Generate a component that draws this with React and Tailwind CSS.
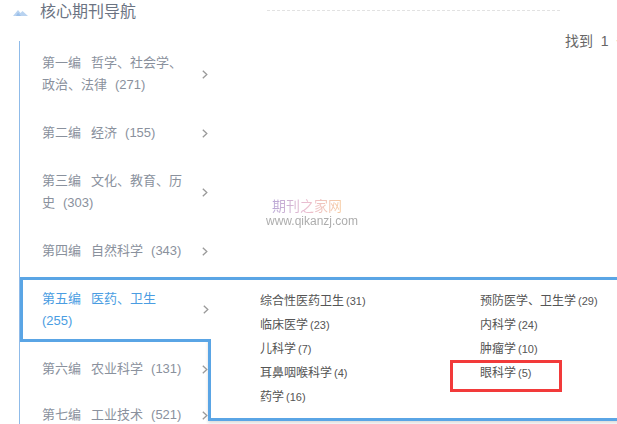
import React from "react";

const FONT = { fontFamily: '"Liberation Sans","Noto Sans CJK SC",sans-serif' };

function Chevron() {
  return (
    <svg width="6" height="9" viewBox="0 0 6 9" className="ml-[11px] shrink-0">
      <polyline points="0.8,0.8 4.8,4.5 0.8,8.2" fill="none" stroke="#9a9a9a" strokeWidth="1.3" />
    </svg>
  );
}

function Label({ head, body, count, br }) {
  return (
    <>
      {head}
      <span className="ml-[10px]">{body}</span>
      {br ? <br /> : null}
      <span className={br ? "" : "ml-[8px]"}>({count})</span>
    </>
  );
}

const items = [
  { head: "第一编", body: "哲学、社会学、政治、法律", count: "271", h: "h-[69px] pb-[3px]" },
  { head: "第二编", body: "经济", count: "155", h: "h-[46px]" },
  { head: "第三编", body: "文化、教育、历史", count: "303", h: "h-[72px]" },
  { head: "第四编", body: "自然科学", count: "343", h: "h-[46px]" },
  { head: "第五编", body: "医药、卫生", count: "255", active: true },
  { head: "第六编", body: "农业科学", count: "131", h: "h-[46px]" },
  { head: "第七编", body: "工业技术", count: "521", h: "h-[46px]" },
];

const sub = [
  ["综合性医药卫生", "31"],
  ["预防医学、卫生学", "29"],
  ["临床医学", "23"],
  ["内科学", "24"],
  ["儿科学", "7"],
  ["肿瘤学", "10"],
  ["耳鼻咽喉科学", "4"],
  ["眼科学", "5"],
  ["药学", "16"],
];

export default function App() {
  return (
    <div className="relative w-[617px] h-[424px] overflow-hidden bg-white" style={FONT}>
      {/* header */}
      <div className="flex h-[24px] items-center">
        <svg width="15" height="7" viewBox="0 0 15 7" className="ml-[13px] shrink-0">
          <polygon points="0,7 5,1 7.5,4 9.5,2 15,7" fill="#b9d3f0" />
          <polygon points="3,7 5,3.5 8,7" fill="#9cc0ea" />
        </svg>
        <span className="ml-[12px] text-[16px] leading-[24px] text-[#6b7382] whitespace-nowrap">核心期刊导航</span>
        <div className="ml-[131px] w-[293px] self-start mt-[10px] border-t border-dashed border-[#e2e2e2]"></div>
      </div>

      {/* body */}
      <div className="flex items-start">
        <div className="relative z-20 mt-[17px] ml-[19px] w-[189px] shrink-0 border-l border-[#8fbbe9] text-[13px] leading-[22px] text-[#8a919d]">
          {items.map((it, i) =>
            it.active ? (
              <div
                key={i}
                className="mt-[3px] mb-[4px] flex h-[65px] w-[191px] items-center border-l-[3px] border-t-[3px] border-b-[3px] border-[#5aa5e5] bg-white pl-[19px] text-[#4a9de2]"
              >
                <div className="w-[150px]">
                  <Label head={it.head} body={it.body} count={it.count} br />
                </div>
                <Chevron />
              </div>
            ) : (
              <div key={i} className={`flex items-center pl-[22px] ${it.h}`}>
                <div className="w-[150px]">
                  <Label head={it.head} body={it.body} count={it.count} />
                </div>
                <Chevron />
              </div>
            )
          )}
        </div>
        <div className="ml-[357px] mt-[7px] whitespace-nowrap text-[14px] leading-[20px] text-[#666]">
          找到&nbsp;&nbsp;1&nbsp;&nbsp;条
        </div>
      </div>

      {/* watermark */}
      <div className="absolute left-[266px] top-[198px] flex flex-col items-start opacity-70">
        <span className="ml-[6px] bg-gradient-to-r from-[#9a82c4] via-[#e3a3bd] to-[#f3b77a] bg-clip-text text-[14px] leading-[16px] text-transparent">
          期刊之家网
        </span>
        <span className="text-[12px] leading-[14px] text-[#8a8a8a]">www.qikanzj.com</span>
      </div>

      {/* flyout panel */}
      <div className="absolute left-[208px] top-[277px] z-10 h-[144px] w-[430px] border-[3px] border-[#5aa5e5] bg-white pl-[49px] pt-[9px] shadow-[0_2px_3px_rgba(0,0,0,0.15)]">
        <div className="grid grid-cols-[220px_1fr]">
          {sub.map(([name, n], i) => (
            <div key={i} className="flex h-[24px] items-center whitespace-nowrap text-[12px] text-[#555]">
              {name}
              <span className="ml-[2px] text-[11px]">({n})</span>
            </div>
          ))}
        </div>
      </div>

      {/* red annotation box */}
      <div className="absolute left-[450px] top-[360px] z-30 h-[32px] w-[112px] border-[3px] border-[#f23a3a]"></div>
    </div>
  );
}
